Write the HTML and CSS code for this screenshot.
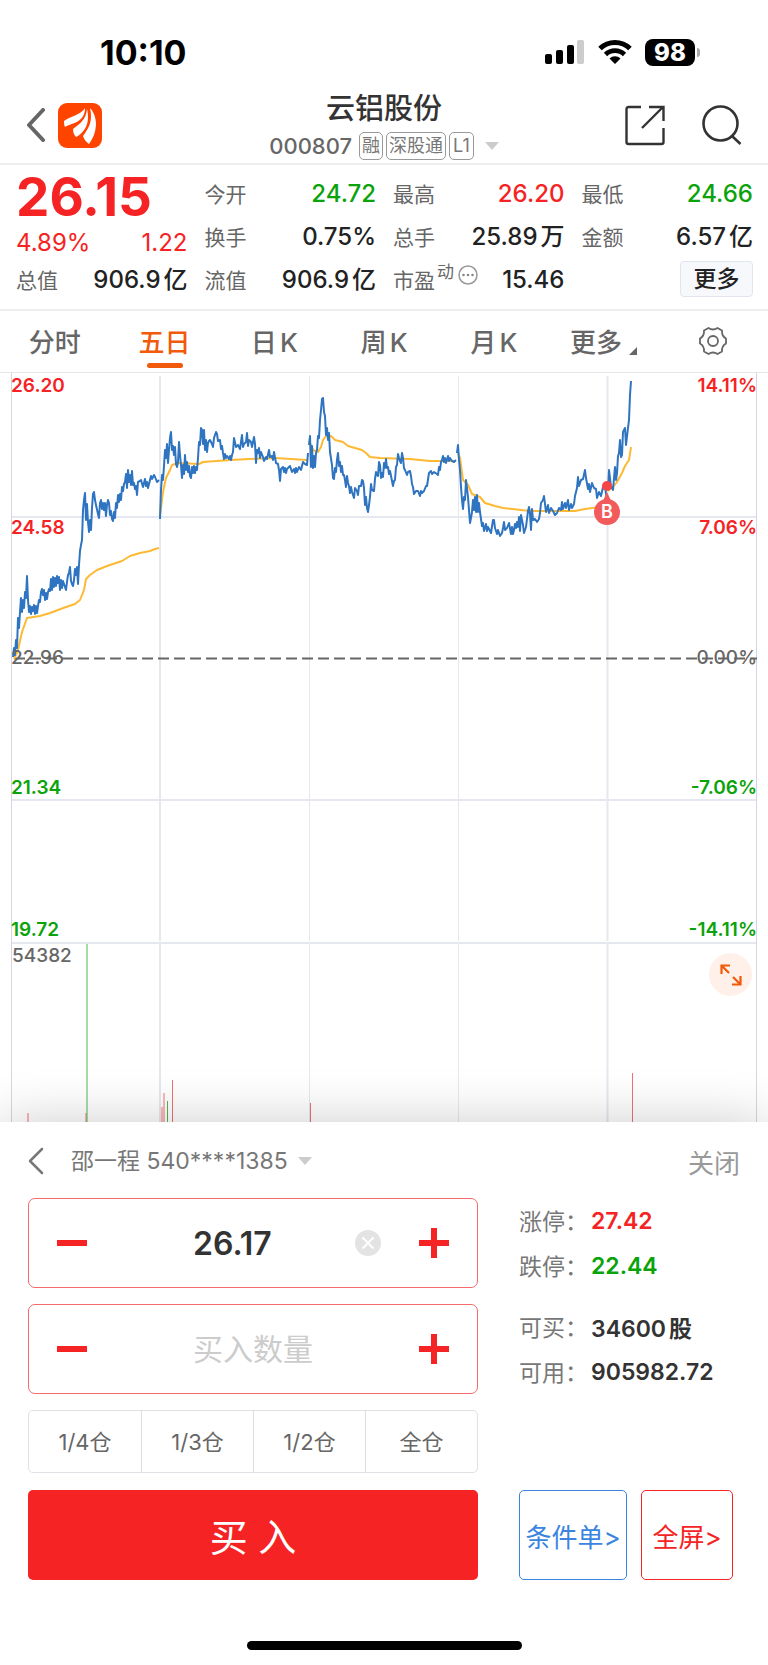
FILE: index.html
```html
<!DOCTYPE html>
<html lang="zh-CN">
<head>
  <meta charset="UTF-8" />
  <meta name="viewport" content="width=device-width, initial-scale=1.0"/>
  <title>云铝股份 000807</title>
  <link rel="stylesheet" href="styles.css">
</head>
<body>

<div class="status-bar">
  <span class="clock">10:10</span>
  <div class="status-icons">
    <svg width="40" height="26" viewBox="0 0 40 26" aria-hidden="true">
      <rect x="0" y="15" width="7" height="10" rx="2"/>
      <rect x="11" y="11" width="7" height="14" rx="2"/>
      <rect x="22" y="6" width="7" height="19" rx="2"/>
      <rect x="32" y="1" width="7" height="24" rx="2" fill="#ccc"/>
    </svg>
    <svg width="36" height="26" viewBox="0 0 36 26" aria-hidden="true">
      <path d="M3 9.5a21.5 21.5 0 0 1 30 0" fill="none" stroke="#000" stroke-width="5"/>
      <path d="M8.5 15.5a13.5 13.5 0 0 1 19 0" fill="none" stroke="#000" stroke-width="4.6"/>
      <path d="M18 25l-5.5-5.6a8 8 0 0 1 11 0z"/>
    </svg>
    <div class="battery">98</div>
  </div>
</div>

<header class="header">
  <div class="header-left">
    <button class="icon-btn" aria-label="返回">
      <svg width="20" height="34" viewBox="0 0 20 34"><path d="M17 2L3 17l14 15" fill="none" stroke="#666" stroke-width="4" stroke-linecap="round" stroke-linejoin="round"/></svg>
    </button>
    <svg width="44" height="45" viewBox="0 0 44 45" aria-hidden="true">
      <rect width="44" height="45" rx="9" fill="#ff4400"/>
      <path fill="#fff" d="M27 5C23 12 13 13 6 18c0 2 0 4 1 6 6-4 20-4 20-19z"/>
      <path fill="#fff" d="M29 6c-1 10-6 14-14 20 0 3 1 6 3 8 6-3 15-11 11-28z"/>
      <path fill="#fff" d="M32 5c3 13-1 20-7 28 1 3 3 6 6 8C38 32 42 16 32 5z"/>
    </svg>
  </div>
  <div class="stock">
    <h1>云铝股份</h1>
    <button class="stock-code">
      <span>000807</span>
      <span class="tags"><i>融</i><i>深股通</i><i>L1</i></span>
      <span class="caret"></span>
    </button>
  </div>
  <div class="header-right">
    <button class="icon-btn" aria-label="分享">
      <svg width="40" height="41" viewBox="0 0 40 41" fill="none" stroke="#333" stroke-width="2.4">
        <path d="M16 2H3.500Q1.500 2 1.500 4v33q0 2 2 2h33q2 0 2-2V23"/><path d="M24 2h14.500v14M38 2L17 23"/>
      </svg>
    </button>
    <button class="icon-btn" aria-label="搜索">
      <svg width="40" height="41" viewBox="0 0 40 41" fill="none" stroke="#333" stroke-width="2.600">
        <circle cx="18.500" cy="18.500" r="17"/><path d="M30 31l8.500 8"/>
      </svg>
    </button>
  </div>
</header>

<section class="quote">
  <div class="quote-col quote-main">
    <strong class="price">26.15</strong>
    <div class="change"><span>4.89%</span><span>1.22</span></div>
    <dl><dt>总值</dt><dd>906.9亿</dd></dl>
  </div>
  <div class="quote-col">
    <dl><dt>今开</dt><dd class="down">24.72</dd></dl>
    <dl><dt>换手</dt><dd>0.75%</dd></dl>
    <dl><dt>流值</dt><dd>906.9亿</dd></dl>
  </div>
  <div class="quote-col">
    <dl><dt>最高</dt><dd class="up">26.20</dd></dl>
    <dl><dt>总手</dt><dd>25.89万</dd></dl>
    <dl>
      <dt class="pe">市盈<sup>动</sup>
        <svg width="20" height="20" viewBox="0 0 20 20" aria-hidden="true"><circle cx="10" cy="10" r="9" fill="none" stroke="#999" stroke-width="1.500"/><g fill="#888"><circle cx="5.500" cy="10" r="1.300"/><circle cx="10" cy="10" r="1.300"/><circle cx="14.500" cy="10" r="1.300"/></g></svg>
      </dt>
      <dd>15.46</dd>
    </dl>
  </div>
  <div class="quote-col">
    <dl><dt>最低</dt><dd class="down">24.66</dd></dl>
    <dl><dt>金额</dt><dd>6.57亿</dd></dl>
    <div class="more-row"><button class="more-btn">更多</button></div>
  </div>
</section>

<nav class="tabs">
  <button>分时</button>
  <button class="active">五日</button>
  <button>日K</button>
  <button>周K</button>
  <button>月K</button>
  <button>更多<span class="corner"></span></button>
  <button aria-label="设置">
    <svg width="30" height="30" viewBox="0 0 30 30" fill="none" stroke="#666" stroke-width="1.800" stroke-linejoin="round">
      <path d="M10.500 2Q15 5 19.500 2L24 4.500Q23.500 10 28 12.500V17.500Q23.500 20 24 25.500L19.500 28Q15 25 10.500 28L6 25.500Q6.500 20 2 17.500V12.500Q6.500 10 6 4.500Z"/><circle cx="15" cy="15" r="5"/>
    </svg>
  </button>
</nav>

<main class="chart">
  <svg class="chart-svg" viewBox="0 373 768 749" role="img" aria-label="五日走势">
    <g class="grid">
      <path d="M11 517H757M11 800H757" stroke-width="2"/>
      <path d="M11 943H757" stroke-width="2"/>
      <path d="M160 376V941M160 944V1122M607.500 376V941M607.500 944V1122" stroke-width="2"/>
      <path d="M309.500 376V941M309.500 944V1122M458.500 376V941M458.500 944V1122" stroke-width="1"/>
      <path class="frame" d="M11.500 373V1122M756.500 373V1122"/>
    </g>

    <path class="base-line" d="M14 658.500H757"/>

    <!-- 均价线 -->
    <g class="avg">
      <path d="M14 659L18 650 22 632 27 618 40 616 50 613 66 607 75 604 80 600 84 590 86 579 90 575 97 570 107 566 122 561 130 556 140 553 150 551 155 549 159 548"/>
      <path d="M160 516L163 492 166 478 170 470 172 465 178 463 199 464 203 462 230 460 250 459 275 458 307 460"/>
      <path d="M309 441L313 450 318 452 321 447 323 440 326 436 331 436 335 440 343 442 348 446 362 450 366 453 370 457 380 458 410 459 430 461 456 461"/>
      <path d="M458 453L460 458 463 480 468 485 472 494 480 497 485 503 495 506 503 508 530 511 575 511 585 509 600 507"/>
      <path d="M608 491L613 487 617 482 622 473 625 466 629 460 631 447"/>
    </g>

    <!-- 分时价格 -->
    <g class="line">
      <path d="M13 657L14 648 15 655 16 640 17 648 18 618 19 628 20 612 21 598 22 612 23 600 24 608 25 592 26 598 27 576 28 600 29 612 30 606 31 614 32 607 33 611 34 605 35 614 36 606 37 613 38 606 39 600 40 602 41 592 42 589 43 595 44 590 45 600 46 593 47 599 48 592 49 589 50 591 51 579 52 590 53 577 54 587 55 578 56 586 57 576 58 583 59 577 60 590 61 580 62 588 63 581 64 584 66 590 67 582 68 575 69 573 70 567 71 581 72 584 73 586 74 580 75 569 76 575 77 567 78 584 79 565 80 551 81 545 82 540 83 510 84 500 85 493 86 520 87 504 88 522 89 532 90 520 91 530 92 508 93 494 94 492 95 500 96 505 98 514 99 518 100 503 101 500 102 509 103 503 104 510 105 503 106 516 107 505 108 500 109 503 110 515 111 511 112 519 113 521 114 512 115 518 116 503 117 508 118 495 119 502 120 494 121 500 122 487 123 491 124 484 125 482 126 474 127 488 128 470 129 482 130 475 131 485 132 471 133 485 134 483 135 489 136 486 137 495 138 482 140 481 141 480 143 487 145 479 146 486 147 482 148 488 150 480 151 476 152 479 154 475 155 477 157 482 159 480"/>
      <path d="M160 519L161 490 162 475 163 480 164 466 165 450 166 458 167 444 168 463 169 450 170 438 171 432 172 450 173 446 174 455 175 447 176 464 177 467 178 462 179 442 180 455 181 465 182 478 183 465 184 474 185 455 186 470 187 462 188 472 189 466 190 476 191 478 192 467 193 473 194 466 195 473 196 467 197 470 198 458 199 442 200 445 201 428 202 430 203 444 204 430 205 450 206 440 207 452 208 443 209 441 210 440 211 442 212 444 213 447 214 438 216 432 217 434 218 441 220 440 221 449 222 446 223 453 224 459 225 454 226 458 227 456 229 459 230 456 231 460 232 455 233 452 234 438 236 447 238 445 240 449 242 435 243 447 244 444 246 442 247 433 248 446 249 440 251 442 252 447 254 437 255 444 256 463 257 450 258 453 259 448 260 458 261 452 263 457 264 461 266 457 267 459 269 450 270 457 272 456 273 460 274 452 276 463 278 464 279 470 280 481 281 469 283 467 284 472 285 468 286 473 287 469 289 467 290 466 292 472 294 469 295 473 296 468 297 472 299 467 301 470 302 466 303 462 305 464 307 465 308 453"/>
      <path d="M309 445L310 436 311 467 312 446 313 468 314 456 315 467 316 453 317 450 318 436 319 438 320 420 321 410 322 399 323 398 324 412 325 416 326 435 327 428 328 440 329 433 330 452 332 465 333 478 334 479 335 468 336 472 337 460 338 453 339 466 340 462 341 472 342 466 343 475 344 475 345 480 346 487 347 476 348 483 349 486 350 493 351 487 352 492 354 498 355 488 357 491 358 495 359 486 361 486 362 480 363 481 364 488 365 505 366 497 367 508 368 512 369 505 370 497 371 484 372 490 374 491 375 479 376 472 377 475 378 476 379 462 380 465 381 478 382 473 383 477 384 463 385 468 386 459 387 468 388 467 389 474 390 471 391 476 393 486 394 481 395 480 396 467 397 465 398 454 399 458 400 461 401 463 402 453 403 458 404 468 405 470 407 475 408 472 410 471 411 476 412 484 413 487 414 494 416 491 418 491 420 496 421 491 422 493 424 491 426 486 427 486 429 473 431 471 432 474 434 472 437 474 438 475 439 467 440 470 441 462 442 460 443 456 444 462 445 458 446 463 448 456 449 461 450 458 452 461 454 462 456 460"/>
      <path d="M457 453L458 445 459 460 460 470 461 487 462 500 463 509 464 497 465 500 466 480 467 488 468 497 469 510 470 523 471 518 472 512 473 500 474 510 475 497 476 512 477 495 478 512 479 503 480 512 482 526 483 523 484 531 486 524 487 531 488 527 490 531 491 533 493 520 494 520 495 528 497 534 498 530 500 536 502 533 503 528 504 522 505 530 507 528 509 523 511 534 512 527 513 534 514 530 515 524 516 528 517 522 518 527 519 517 520 531 521 515 522 520 523 525 524 533 526 527 528 511 529 507 530 514 531 530 532 509 533 520 535 519 537 522 539 519 540 513 541 503 543 500 544 496 546 512 548 505 549 513 551 508 553 511 555 515 557 513 559 508 561 510 562 502 563 509 565 503 566 508 568 500 569 510 571 504 572 508 574 504 575 496 577 488 578 477 579 486 581 480 583 479 585 470 586 478 588 489 589 484 590 492 592 483 594 488 596 489 597 498 599 492 601 496 603 487 605 487 607 500"/>
      <path d="M608 490L609 470 610 478 611 488 612 487 613 490 614 478 615 467 616 480 617 473 618 456 619 453 620 440 621 457 622 455 623 432 625 428 626 445 628 428 629 420 630 395 631 381"/>
    </g>

    <!-- 买入点 -->
    <g class="marker">
      <path d="M607 492L612 503H602Z"/>
      <circle cx="607" cy="512" r="13"/>
      <circle class="dot" cx="607" cy="486" r="5"/>
      <text x="607" y="518" text-anchor="middle">B</text>
    </g>

    <!-- 成交量 -->
    <g class="volume">
      <path class="vol-up" d="M28 1113V1122M86 1113V1122M162 1107V1122M164 1093V1122M172.500 1080V1122M310.500 1103V1122M632.500 1073V1122"/>
      <path class="vol-down" d="M87 944V1122M167.500 1101V1122"/>
    </g>

    <g class="axis">
      <text class="up" x="11" y="392">26.20</text>
      <text class="up" x="11" y="534">24.58</text>
      <text x="11" y="664">22.96</text>
      <text class="down" x="11" y="794">21.34</text>
      <text class="down" x="11" y="936">19.72</text>
      <text x="12" y="962">54382</text>
      <g text-anchor="end">
        <text class="up" x="757" y="392">14.11%</text>
        <text class="up" x="757" y="534">7.06%</text>
        <text x="757" y="664">0.00%</text>
        <text class="down" x="757" y="794">-7.06%</text>
        <text class="down" x="757" y="936">-14.11%</text>
      </g>
    </g>
  </svg>
  <button class="expand" aria-label="展开">
    <svg width="22" height="22" viewBox="0 0 22 22" fill="none" stroke="#f05a0a" stroke-width="2.200"><path d="M1.500 10V1.500H10M1.500 1.500L9 9M20.500 12v8.500H12M20.500 20.500L13 13"/></svg>
  </button>
</main>

<section class="trade">
  <div class="trade-head">
    <button class="icon-btn" aria-label="收起">
      <svg width="16" height="28" viewBox="0 0 16 28"><path d="M14 2L2 14l12 12" fill="none" stroke="#777" stroke-width="2.500" stroke-linecap="round" stroke-linejoin="round"/></svg>
    </button>
    <label class="account">
      <select aria-label="交易账户"><option>邵一程 540****1385</option></select>
      <span class="caret"></span>
    </label>
    <button class="close-btn">关闭</button>
  </div>

  <div class="trade-body">
    <form class="order">
      <div class="stepper">
        <button type="button" class="step minus" aria-label="减少价格"></button>
        <input type="text" class="price-input" value="26.17" aria-label="买入价格" inputmode="decimal">
        <button type="button" class="clear" aria-label="清除">
          <svg width="26" height="26" viewBox="0 0 26 26"><circle cx="13" cy="13" r="13" fill="#e3e3e3"/><path d="M7.500 7.500l11 11M18.500 7.500l-11 11" stroke="#fff" stroke-width="2"/></svg>
        </button>
        <button type="button" class="step plus" aria-label="增加价格"></button>
      </div>
      <div class="stepper">
        <button type="button" class="step minus" aria-label="减少数量"></button>
        <input type="text" placeholder="买入数量" aria-label="买入数量" inputmode="numeric">
        <button type="button" class="step plus" aria-label="增加数量"></button>
      </div>
      <div class="portions">
        <button type="button">1/4仓</button>
        <button type="button">1/3仓</button>
        <button type="button">1/2仓</button>
        <button type="button">全仓</button>
      </div>
      <button type="button" class="buy">买 入</button>
    </form>

    <aside class="side">
      <dl class="limits">
        <div><dt>涨停：</dt><dd class="up">27.42</dd></div>
        <div><dt>跌停：</dt><dd class="down">22.44</dd></div>
      </dl>
      <dl class="limits">
        <div><dt>可买：</dt><dd>34600股</dd></div>
        <div><dt>可用：</dt><dd>905982.72</dd></div>
      </dl>
      <div class="side-btns">
        <button class="cond">条件单&gt;</button>
        <button class="full">全屏&gt;</button>
      </div>
    </aside>
  </div>
  <div class="home-bar"></div>
</section>

</body>
</html>
```
FILE: styles.css
```css
* {
  box-sizing: border-box;
}

body {
  margin: 0;
  min-height: 100vh;
  display: flex;
  flex-direction: column;
  font-family: Inter, "Noto Sans CJK SC", sans-serif;
  color: #222;
  background: #fff;
}

button,
input,
select {
  font: inherit;
  color: inherit;
  background: none;
  border: none;
  border-radius: 0;
  padding: 0;
  margin: 0;
}

button {
  cursor: pointer;
}

svg {
  display: block;
}

h1,
dl,
dd {
  margin: 0;
}

.up {
  color: #f52323;
  fill: #f52323;
}

.down {
  color: #0aa30a;
  fill: #0aa30a;
}

.icon-btn {
  display: flex;
}

.caret {
  border: 7px solid transparent;
  border-top: 8px solid #ccc;
  border-bottom: 0;
}

/* 状态栏 */
.status-bar {
  display: flex;
  justify-content: space-between;
  align-items: center;
  height: 88px;
  padding: 16px 70px 0 100px;
  color: #000;
}

.clock {
  font-size: 34px;
  font-weight: 700;
}

.status-icons {
  display: flex;
  align-items: center;
  gap: 12px;
}

.battery {
  position: relative;
  width: 50px;
  height: 27px;
  margin-right: 3px;
  border-radius: 8px;
  background: #000;
  color: #fff;
  font-size: 24px;
  font-weight: 800;
  line-height: 27px;
  text-align: center;
}

.battery::after {
  content: "";
  position: absolute;
  left: 52px;
  top: 9px;
  width: 3px;
  height: 9px;
  border-radius: 0 3px 3px 0;
  background: #aaa;
}

/* 标题栏 */
.header {
  display: grid;
  grid-template-columns: 1fr auto 1fr;
  align-items: center;
  height: 77px;
  padding: 0 26px 2px;
  border-bottom: 2px solid #eee;
}

.header-left,
.header-right {
  display: flex;
  align-items: center;
  gap: 12px;
}

.header-right {
  justify-content: flex-end;
  gap: 37px;
}

.stock h1 {
  font-size: 29px;
  font-weight: 500;
  line-height: 42px;
  text-align: center;
  color: #333;
}

.stock-code {
  display: flex;
  align-items: center;
  gap: 7px;
  height: 32px;
  font-size: 22px;
  font-weight: 500;
  color: #666;
}

.tags {
  display: flex;
  gap: 3px;
}

.tags i {
  padding: 0 2px;
  border: 1px solid #999;
  border-radius: 5px;
  font-size: 18px;
  font-style: normal;
  font-weight: 400;
  line-height: 26px;
  color: #777;
}

.tags i:last-child {
  padding: 0 3px;
}

.stock-code .caret {
  margin-left: 4px;
}

/* 行情 */
.quote {
  display: grid;
  grid-template-columns: repeat(4, 1fr);
  gap: 17px;
  height: 146px;
  padding: 7px 15px 7px 16px;
  border-bottom: 2px solid #eee;
  text-autospace: normal;
}

.quote dl,
.more-row {
  display: flex;
  justify-content: space-between;
  align-items: center;
  height: 43px;
}

.quote dt {
  padding-bottom: 2px;
  font-size: 21px;
  color: #666;
}

.quote dd {
  font-size: 24px;
  font-weight: 500;
  line-height: 40px;
  white-space: nowrap;
}

.price {
  display: block;
  height: 54px;
  font-size: 53px;
  line-height: 50px;
  color: #f52323;
}

.change {
  display: flex;
  justify-content: space-between;
  height: 32px;
  font-size: 24px;
  line-height: 34px;
  color: #f52323;
}

.pe {
  display: flex;
  align-items: center;
}

.pe sup {
  align-self: flex-start;
  margin: 0 4px 0 2px;
  font-size: 17px;
  line-height: 17px;
}

.pe svg {
  margin-bottom: 8px;
}

.more-row {
  justify-content: flex-end;
}

.more-btn {
  width: 73px;
  height: 36px;
  margin-bottom: 2px;
  border: 1px solid #e3e5ee;
  border-radius: 4px;
  background: #f7f8fb;
  font-size: 23px;
  font-weight: 500;
  line-height: 32px;
}

/* 周期切换 */
.tabs {
  display: grid;
  grid-template-columns: repeat(7, 1fr);
  height: 61px;
  text-autospace: normal;
}

.tabs button {
  position: relative;
  display: flex;
  justify-content: center;
  align-items: center;
  padding-bottom: 2px;
  font-size: 26px;
  font-weight: 500;
  color: #666;
}

.tabs .active {
  color: #f05a0a;
}

.tabs .active::after {
  content: "";
  position: absolute;
  bottom: 4px;
  width: 36px;
  height: 5px;
  border-radius: 3px;
  background: #f05a0a;
}

.corner {
  align-self: flex-end;
  margin: 0 0 15px 7px;
  border-left: 8px solid transparent;
  border-bottom: 8px solid #666;
}

/* 走势图 */
.chart {
  position: relative;
  border-top: 1px solid #e5e5ea;
}

.chart-svg {
  width: 100%;
  height: auto;
}

.grid path {
  stroke: #e6e8f0;
}

.grid .frame {
  stroke: #d3d6e0;
}

.base-line {
  stroke: #666;
  stroke-width: 2;
  stroke-dasharray: 11 5;
}

.avg path,
.line path {
  fill: none;
  stroke: #fdb933;
  stroke-width: 2;
  stroke-linejoin: round;
}

.line path {
  stroke: #2f74c0;
}

.marker {
  fill: #f25b5b;
}

.marker .dot {
  fill: #f54545;
}

.marker text {
  fill: #fff;
  font-size: 18px;
  font-weight: 600;
}

.volume path {
  stroke: #f27070;
  stroke-width: 1;
}

.volume .vol-down {
  stroke: #4fb84f;
}

.axis text {
  font-size: 19px;
  font-weight: 600;
}

.axis text:not([class]) {
  fill: #666;
  font-weight: 500;
}

.expand {
  position: absolute;
  right: 16px;
  top: 580px;
  display: flex;
  justify-content: center;
  align-items: center;
  width: 43px;
  height: 43px;
  border-radius: 50%;
  background: #fff0e9;
}

/* 下单面板 */
.trade {
  position: relative;
  flex: 1;
  display: flex;
  flex-direction: column;
  padding: 12px 28px 15px;
  background: #fff;
  box-shadow: 0 0 50px rgba(0, 0, 0, 0.2);
}

.trade-head {
  display: flex;
  align-items: center;
  height: 54px;
  margin-bottom: 10px;
  color: #777;
}

.account {
  display: flex;
  align-items: center;
  gap: 10px;
  margin: 0 auto 0 27px;
}

.account select {
  appearance: none;
  font-size: 23px;
}

.close-btn {
  font-size: 26px;
  color: #999;
}

.trade-body {
  display: grid;
  grid-template-columns: minmax(0, 450fr) minmax(0, 214fr);
  gap: 41px;
  padding-right: 7px;
}

.order {
  display: flex;
  flex-direction: column;
  gap: 16px;
}

.stepper {
  display: flex;
  align-items: center;
  height: 90px;
  border: 1px solid #f56a6a;
  border-radius: 7px;
}

.step {
  flex: none;
  width: 86px;
  height: 88px;
  background: linear-gradient(#f52323, #f52323) center / 30px 6px no-repeat;
}

.plus {
  background-image: linear-gradient(#f52323, #f52323), linear-gradient(#f52323, #f52323);
  background-size: 30px 6px, 6px 30px;
}

.stepper input {
  flex: 1;
  min-width: 0;
  height: 88px;
  padding-left: 78px;
  font-size: 30px;
  outline: none;
}

.stepper .price-input {
  font-size: 32px;
  font-weight: 600;
  color: #333;
}

.stepper input::placeholder {
  color: #ccc;
}

.clear {
  margin-right: 10px;
}

.portions {
  display: grid;
  grid-template-columns: repeat(4, 1fr);
  height: 63px;
  border: 1px solid #e0e0e6;
  border-radius: 5px;
}

.portions button {
  padding-bottom: 3px;
  font-size: 22px;
  color: #666;
}

.portions button + button {
  border-left: 1px solid #ddd;
}

.buy {
  height: 90px;
  margin-top: 1px;
  padding-bottom: 2px;
  border-radius: 5px;
  background: #f52323;
  color: #fff;
  font-size: 38px;
}

.side {
  display: flex;
  flex-direction: column;
}

.limits {
  margin-bottom: 16px;
  text-autospace: normal;
}

.limits div {
  display: flex;
  align-items: center;
  height: 45px;
}

.limits dt {
  width: 72px;
  padding-bottom: 2px;
  font-size: 23px;
  color: #777;
  white-space: nowrap;
}

.limits dd {
  font-size: 23px;
  font-weight: 600;
}

.limits dd:not([class]) {
  color: #333;
}

.side-btns {
  display: grid;
  grid-template-columns: 108fr 92fr;
  gap: 14px;
  margin-top: auto;
}

.side-btns button {
  height: 90px;
  border: 1px solid;
  border-radius: 5px;
  font-size: 26px;
  white-space: nowrap;
}

.side-btns .cond {
  color: #3a85e0;
}

.side-btns .full {
  color: #f52323;
}

.home-bar {
  align-self: center;
  width: 275px;
  height: 9px;
  margin-top: auto;
  border-radius: 5px;
  background: #000;
}
```
